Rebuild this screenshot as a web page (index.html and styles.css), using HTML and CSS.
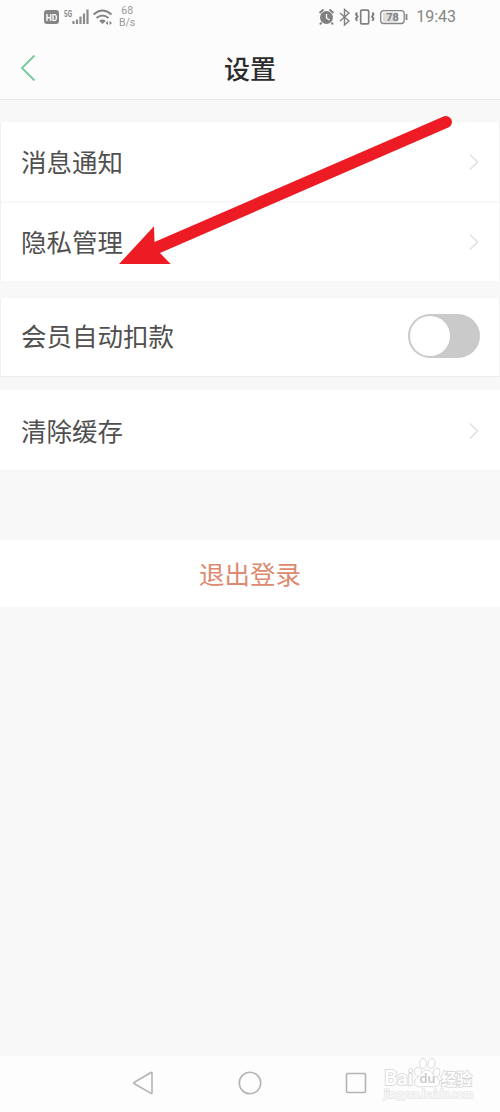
FILE: index.html
```html
<!DOCTYPE html>
<html lang="zh-CN">
<head>
    <meta charset="UTF-8">
    <meta name="viewport" content="width=device-width, initial-scale=1.0">
    <title>设置</title>
    <link rel="stylesheet" href="styles.css">
</head>
<body>

    <div class="phone">
        <div class="status-bar">
            <div class="status-left">
                <svg width="74" height="20" viewBox="0 0 74 20">
                    <rect x="0" y="3" width="15" height="14" rx="3" fill="#858585"/>
                    <text class="hd-text" x="7.5" y="13.5" text-anchor="middle">HD</text>
                    <text class="network-text" x="20" y="9.5" textLength="8" lengthAdjust="spacingAndGlyphs">5G</text>
                    <path d="M29.500 14v3M33 12.500V17M36.500 9.500V17M40 6.500V17M43.500 2.500V17" stroke="#8c8c8c" stroke-width="2.200"/>
                    <path d="M49.500 7.500q9-8 18 0M52.500 11q6-5 12 0" fill="none" stroke="#858585" stroke-width="2"/>
                    <path d="M58.500 17l-3.300-3.300q3.300-2.500 6.600 0z" fill="#858585"/>
                    <path d="M61.500 16l2.500-2v4zM68 16l-2.500-2v4z" fill="#858585"/>
                </svg>
                <div class="net-speed"><span>68</span><span>B/s</span></div>
            </div>
            <div class="status-right">
                <svg width="92" height="20" viewBox="0 0 92 20">
                    <!-- 闹钟 -->
                    <circle cx="8.500" cy="10.500" r="6.500" fill="#808080"/>
                    <path d="M1.500 6l4-3.500M15.500 6l-4-3.500M3.500 15.500L2 17.500M13.500 15.500l1.500 2" stroke="#808080" stroke-width="2"/>
                    <path d="M8.500 7v4l3 2" fill="none" stroke="#fcfcfc" stroke-width="1.300"/>
                    <!-- 蓝牙 -->
                    <path d="M22 6l9 8-4.500 4V2.500L31 6l-9 8" fill="none" stroke="#808080" stroke-width="1.400"/>
                    <!-- 振动 -->
                    <rect x="42.700" y="3.200" width="8" height="13.600" rx="1" fill="none" stroke="#808080" stroke-width="1.700"/>
                    <path d="M39 5.500l-1 2 1.500 2-1.500 2 1 2.500M54.500 5.500l1 2-1.500 2 1.500 2-1 2.500" fill="none" stroke="#808080" stroke-width="2"/>
                    <!-- 电量 -->
                    <rect x="62.700" y="3.700" width="23.500" height="12.800" rx="3" fill="none" stroke="#858585" stroke-width="1.300"/>
                    <rect x="65" y="5.500" width="15" height="9.200" rx="1" fill="#dcdcdc"/>
                    <text class="battery-text" x="74.500" y="14" text-anchor="middle">78</text>
                    <path d="M88.500 7v6" stroke="#858585" stroke-width="1.800"/>
                </svg>
                <span class="time">19:43</span>
            </div>
        </div>

        <header class="title-bar">
            <svg class="back" width="16" height="28" viewBox="0 0 16 28">
                <path d="M14.500 1.500L2 14l12.500 12.500" fill="none" stroke="#7bcb9c" stroke-width="2"/>
            </svg>
            <h1>设置</h1>
        </header>

        <main class="content">
            <div class="group">
                <div class="row">
                    <span>消息通知</span>
                    <svg class="chevron" width="12" height="18" viewBox="0 0 12 18"><path d="M2 1.500L9.500 9 2 16.500"/></svg>
                </div>
                <div class="row">
                    <span>隐私管理</span>
                    <svg class="chevron" width="12" height="18" viewBox="0 0 12 18"><path d="M2 1.500L9.500 9 2 16.500"/></svg>
                </div>
            </div>

            <div class="group group-switch">
                <div class="row">
                    <span>会员自动扣款</span>
                    <div class="switch"><div class="knob"></div></div>
                </div>
            </div>

            <div class="group group-cache">
                <div class="row">
                    <span>清除缓存</span>
                    <svg class="chevron" width="12" height="18" viewBox="0 0 12 18"><path d="M2 1.500L9.500 9 2 16.500"/></svg>
                </div>
            </div>

            <div class="logout">退出登录</div>
        </main>

        <nav class="nav-bar">
            <svg width="22" height="24" viewBox="0 0 22 24"><path d="M20 2v20a.7.7 0 0 1-1 .4L2 12.500a.6.6 0 0 1 0-1L19 1.500a.7.7 0 0 1 1 .5z"/></svg>
            <svg width="24" height="24" viewBox="0 0 24 24"><circle cx="12" cy="12" r="10.700"/></svg>
            <svg width="22" height="22" viewBox="0 0 22 22"><rect x="1.500" y="1.500" width="19" height="19" rx="1"/></svg>
        </nav>

        <!-- 水印 -->
        <svg class="watermark" width="100" height="52" viewBox="0 0 100 52">
            <text class="wm-name" x="2" y="33" textLength="29" lengthAdjust="spacingAndGlyphs">Bai</text>
            <g class="paw">
                <ellipse cx="36" cy="20" rx="3.500" ry="4.500" transform="rotate(-15 36 20)"/>
                <ellipse cx="41" cy="11.500" rx="3.500" ry="5"/>
                <ellipse cx="49.500" cy="11.500" rx="3.500" ry="5" transform="rotate(12 49.500 11.500)"/>
                <ellipse cx="54.500" cy="20.500" rx="3.300" ry="4.500" transform="rotate(15 54.500 20.500)"/>
                <path d="M45 18c-4 0-5.500 4-8.500 6.500-4 3-5 6-3 8.500 3 3 7 1.500 11.500 1.500s8.500 1.500 11.500-1.500c2-2.500 1-5.500-3-8.500-3.500-2.500-4.500-6.500-8.500-6.500z"/>
            </g>
            <text class="wm-du" x="45.500" y="31" text-anchor="middle">du</text>
            <text class="wm-cn" x="59" y="32.500" textLength="31">经验</text>
            <text class="wm-url" x="2" y="46" textLength="89" lengthAdjust="spacingAndGlyphs">jingyan.baidu.com</text>
        </svg>

        <!-- 指向隐私管理的箭头 -->
        <svg class="arrow" width="336" height="152" viewBox="0 0 336 152">
            <path d="M2 150L37 112.300l.5 15.700L326.500 2.500a6 6 0 0 1 4.800 11L43 139l10.700 11z" fill="#ed1c24"/>
        </svg>
    </div>

</body>
</html>
```

FILE: styles.css
```css
* {
    box-sizing: border-box;
}
body {
    margin: 0;
    background-color: #f8f8f8;
    font-family: KaiTi, "Noto Sans CJK SC", sans-serif;
    color: #505050;
}
.phone {
    position: relative;
    display: flex;
    flex-direction: column;
    width: 500px;
    height: 1112px;
    overflow: hidden;
}
.status-bar {
    display: flex;
    justify-content: space-between;
    height: 38px;
    padding: 7px 44px 0;
    background-color: #fcfcfc;
    font-family: Roboto, sans-serif;
    color: #858585;
}
.status-left,
.status-right {
    display: flex;
    align-items: center;
    height: 20px;
}
.status-right {
    gap: 6px;
}
.net-speed {
    display: flex;
    flex-direction: column;
    align-items: center;
    margin-left: 1px;
    font-size: 10.5px;
    line-height: 12px;
    color: #999999;
}
.time {
    font-size: 16px;
    line-height: 20px;
}
.hd-text {
    font-size: 8.5px;
    font-weight: bold;
    fill: #ffffff;
}
.network-text {
    font-size: 9px;
    font-weight: bold;
    fill: #858585;
}
.battery-text {
    font-size: 11px;
    font-weight: bold;
    fill: #808080;
}
.title-bar {
    display: grid;
    grid-template-columns: 40px 1fr 40px;
    align-items: center;
    height: 62px;
    background-color: #fcfcfc;
    border-bottom: 1px solid #e8e8e8;
}
.back {
    margin-left: 20px;
    margin-top: -1px;
}
.title-bar h1 {
    margin: 0;
    padding-bottom: 2px;
    font-size: 26px;
    font-weight: 500;
    line-height: 38px;
    text-align: center;
    color: #2c2c2c;
}
.content {
    flex: 1;
    padding-top: 22px;
}
.group {
    background-color: #ffffff;
    border-left: 1px solid #f0f0f0;
    border-right: 1px solid #f3f3f3;
}
.row {
    display: flex;
    align-items: center;
    justify-content: space-between;
    height: 79px;
    padding: 0 19px 0 20px;
    font-size: 25.5px;
    line-height: 36px;
}
.row span {
    padding-bottom: 2px;
}
.row + .row {
    height: 80px;
    border-top: 2px solid #f8f8f8;
}
.chevron path {
    fill: none;
    stroke: #e2e2e2;
    stroke-width: 1.7;
}
.group-switch {
    margin-top: 17px;
    border-bottom: 1px solid #ececec;
}
.group-switch .row {
    height: 78px;
    padding-bottom: 2px;
}
.switch {
    width: 72px;
    height: 44px;
    padding: 2px;
    border-radius: 22px;
    background-color: #cacaca;
}
.knob {
    width: 40px;
    height: 40px;
    border-radius: 50%;
    background-color: #ffffff;
}
.group-cache {
    margin-top: 13px;
    border: none;
}
.group-cache .row {
    height: 80px;
    padding: 2px 20px 0 21px;
}
.logout {
    margin-top: 70px;
    height: 67px;
    background-color: #ffffff;
    font-size: 25.5px;
    line-height: 65px;
    text-align: center;
    color: #dd8a70;
}
.nav-bar {
    display: flex;
    align-items: center;
    justify-content: space-between;
    height: 56px;
    padding: 0 133px 2px 132px;
    background-color: #fdfdfd;
}
.nav-bar svg {
    fill: none;
    stroke: #b4b4b4;
    stroke-width: 1.6;
}
.watermark {
    position: absolute;
    left: 382px;
    top: 1052px;
    font-family: Lato, "Noto Sans CJK SC", sans-serif;
}
.watermark text {
    fill: #ffffff;
    stroke: #d4d4d4;
    stroke-width: 1.6;
    paint-order: stroke;
}
.wm-name {
    font-size: 21px;
    font-weight: bold;
}
.paw {
    fill: #ffffff;
    stroke: #dadada;
}
.watermark .wm-du {
    font-size: 14px;
    font-weight: bold;
    fill: #cccccc;
    stroke: none;
}
.wm-cn {
    font-size: 15.5px;
    font-weight: bold;
}
.watermark .wm-url {
    font-size: 10.5px;
    stroke: #e6e6e6;
}
.arrow {
    position: absolute;
    left: 117px;
    top: 114px;
}
```
